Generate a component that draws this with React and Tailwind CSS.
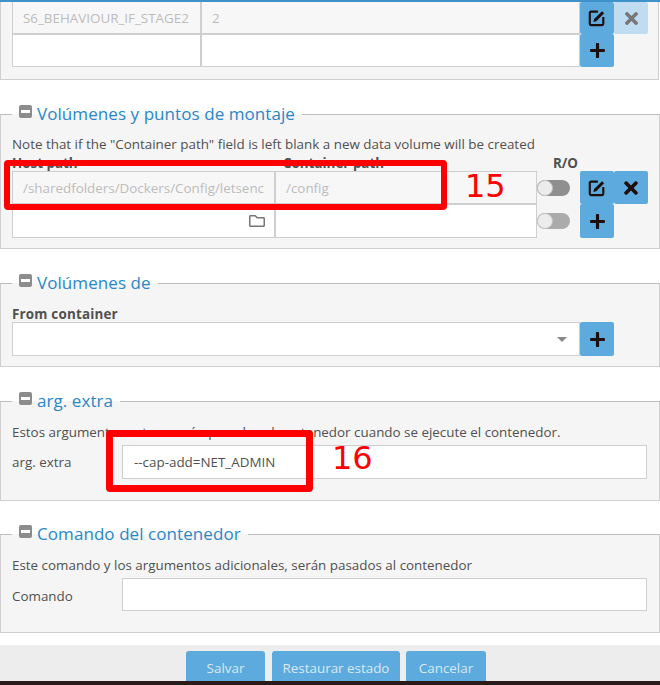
import React from "react";
import { FaPlus, FaTimes, FaRegFolder } from "react-icons/fa";

const inputClass =
  "h-full border border-[#cfcfcf] px-[10px] text-[13.4px] text-[#505050] outline-none min-w-0";

function EditIcon({ className = "" }) {
  return (
    <svg viewBox="0 0 20 20" className={`w-[18px] h-[18px] ${className}`} fill="none">
      <path d="M11 3H3.5A1.5 1.5 0 0 0 2 4.5v12A1.5 1.5 0 0 0 3.5 18h12a1.5 1.5 0 0 0 1.5-1.5V9" stroke="currentColor" strokeWidth="2.4" />
      <path d="M6 14.5l.8-3.4L15.6 2.4l2.3 2.3-8.7 8.8z" fill="currentColor" />
    </svg>
  );
}

function IconButton({ children, faded }) {
  return (
    <button
      className={`w-[34px] h-full shrink-0 rounded-[2px] flex items-center justify-center ${
        faded ? "bg-[#c0dcf0] text-[#777]" : "bg-[#5dabde] text-[#1f0f0c]"
      }`}
    >
      {children}
    </button>
  );
}

function Toggle({ dark }) {
  return (
    <div className="w-[34px] shrink-0 flex items-center">
      <div className={`w-[33px] h-[16px] rounded-full relative ${dark ? "bg-[#8f8f8f]" : "bg-[#ababab]"}`}>
        <div className="absolute left-0 top-0 w-[16px] h-[16px] rounded-full bg-[#ececec] border border-[#c4c4c4]" />
      </div>
    </div>
  );
}

function Section({ title, className = "", children }) {
  return (
    <fieldset className={`border border-[#cfcfcf] border-t-[#bdbdbd] bg-[#f5f5f5] px-[11px] ${className}`}>
      <legend className="px-[7px] h-[24px] flex items-center gap-[5px] text-[17px] tracking-[0.07px] leading-[24px] text-[#2a87c9]">
        <span className="w-[13px] h-[13px] rounded-[2px] bg-[#8c8c8c] flex items-center justify-center -mt-[6px]">
          <span className="w-[9px] h-[3px] bg-white" />
        </span>
        {title}
      </legend>
      {children}
    </fieldset>
  );
}

export default function App() {
  return (
    <div className="w-[660px] h-[685px] overflow-hidden bg-white flex flex-col font-['Open_Sans','Noto_Sans',sans-serif] text-[13.4px] text-[#505050]">
      <div className="h-[2px] bg-[#3d93c9] shrink-0" />

      {/* Entorno */}
      <div className="h-[78px] shrink-0 w-[659px] border border-t-0 border-[#cfcfcf] bg-[#f5f5f5] pl-[11px]">
        <div className="flex h-[32px]">
          <input readOnly value="S6_BEHAVIOUR_IF_STAGE2" className={`${inputClass} border-t-0 w-[189px] bg-[#f7f7f7] text-[#bcbcbc]`} />
          <input readOnly value="2" className={`${inputClass} border-t-0 w-[379px] bg-[#f7f7f7] text-[#bcbcbc]`} />
          <IconButton><EditIcon /></IconButton>
          <IconButton faded><FaTimes size={19} /></IconButton>
        </div>
        <div className="flex h-[33px]">
          <input readOnly className={`${inputClass} w-[189px] bg-white`} />
          <input readOnly className={`${inputClass} w-[379px] bg-white`} />
          <IconButton><FaPlus size={17} /></IconButton>
        </div>
      </div>

      {/* Volumenes */}
      <div className="relative mt-[22px] shrink-0">
        <Section title="Volúmenes y puntos de montaje" className="h-[147px]">
          <p className="mt-[8px] h-[20px] leading-[20px]">
            Note that if the "Container path" field is left blank a new data volume will be created
          </p>
          <div className="flex h-[17px] font-bold leading-[18px]">
            <span className="w-[263px]">Host path</span>
            <span className="w-[262px] pl-[8px]">Container path</span>
            <span className="w-[34px] pl-[16px] whitespace-nowrap">R/O</span>
          </div>
          <div className="flex h-[33px]">
            <input readOnly value="/sharedfolders/Dockers/Config/letsencrypt" className={`${inputClass} w-[263px] bg-[#f7f7f7] text-[#bcbcbc]`} />
            <input readOnly value="/config" className={`${inputClass} w-[262px] bg-[#f7f7f7] text-[#bcbcbc]`} />
            <Toggle dark />
            <div className="w-[9px] shrink-0" />
            <IconButton><EditIcon /></IconButton>
            <IconButton><FaTimes size={20} /></IconButton>
          </div>
          <div className="flex h-[34px]">
            <div className="relative w-[263px] h-full">
              <input readOnly className={`${inputClass} w-full bg-white`} />
              <FaRegFolder size={16} className="absolute right-[10px] top-[9px] text-[#777]" />
            </div>
            <input readOnly className={`${inputClass} w-[262px] bg-white`} />
            <Toggle />
            <div className="w-[9px] shrink-0" />
            <IconButton><FaPlus size={17} /></IconButton>
          </div>
        </Section>
        <div className="absolute left-[4px] top-[58px] w-[443px] h-[50px] border-[6px] border-[#ff0000] rounded-[4px]" />
        <span className="absolute left-[465px] top-[65px] font-['DejaVu_Sans',sans-serif] text-[32px] leading-[38px] text-[#ff0000]">15</span>
      </div>

      {/* Volumenes de */}
      <div className="mt-[22px] shrink-0">
        <Section title="Volúmenes de" className="h-[96px]">
          <div className="mt-[10px] h-[17px] font-bold leading-[18px] tracking-[0.2px]">From container</div>
          <div className="flex h-[34px]">
            <div className="relative w-[568px] h-full border border-[#cfcfcf] bg-white">
              <span className="absolute right-[12px] top-[14px] w-0 h-0 border-x-[5px] border-x-transparent border-t-[5px] border-t-[#888]" />
            </div>
            <IconButton><FaPlus size={17} /></IconButton>
          </div>
        </Section>
      </div>

      {/* Argumentos extra */}
      <div className="relative mt-[22px] shrink-0">
        <Section title="arg. extra" className="h-[112px]">
          <p className="mt-[9px] h-[20px] leading-[20px]">
            Estos argumentos extras serán pasados al contenedor cuando se ejecute el contenedor.
          </p>
          <div className="flex mt-[3px] h-[34px] items-center">
            <span className="w-[110px] pt-[1px]">arg. extra</span>
            <input readOnly value="--cap-add=NET_ADMIN" className={`${inputClass} w-[525px] bg-white pl-[11px]`} />
          </div>
        </Section>
        <div className="absolute left-[106px] top-[41px] w-[207px] h-[62px] border-[7px] border-[#ff0000] rounded-[4px]" />
        <span className="absolute left-[332px] top-[50px] font-['DejaVu_Sans',sans-serif] text-[32px] leading-[38px] text-[#ff0000]">16</span>
      </div>

      {/* Comando */}
      <div className="mt-[21px] shrink-0">
        <Section title="Comando del contenedor" className="h-[111px]">
          <p className="mt-[9px] h-[20px] leading-[20px]">
            Este comando y los argumentos adicionales, serán pasados al contenedor
          </p>
          <div className="flex mt-[3px] h-[33px] items-center">
            <span className="w-[110px] pt-[3px]">Comando</span>
            <input readOnly className={`${inputClass} w-[525px] bg-white`} />
          </div>
        </Section>
      </div>

      {/* Pie */}
      <div className="mt-auto shrink-0">
        <div className="h-[36px] bg-[#ecedec] flex items-end gap-[6px] pl-[186px]">
          <button className="w-[79px] mr-[1px] h-[30px] pt-[4px] rounded-t-[3px] bg-[#5dabde] text-[13.4px] text-[#d9e8f3]">Salvar</button>
          <button className="w-[128px] h-[30px] pt-[4px] rounded-t-[3px] bg-[#5dabde] text-[13.4px] text-[#d9e8f3]">Restaurar estado</button>
          <button className="w-[80px] h-[30px] pt-[4px] rounded-t-[3px] bg-[#5dabde] text-[13.4px] text-[#d9e8f3]">Cancelar</button>
        </div>
        <div className="h-[4px] bg-[#2a1a1a]" />
      </div>
    </div>
  );
}
